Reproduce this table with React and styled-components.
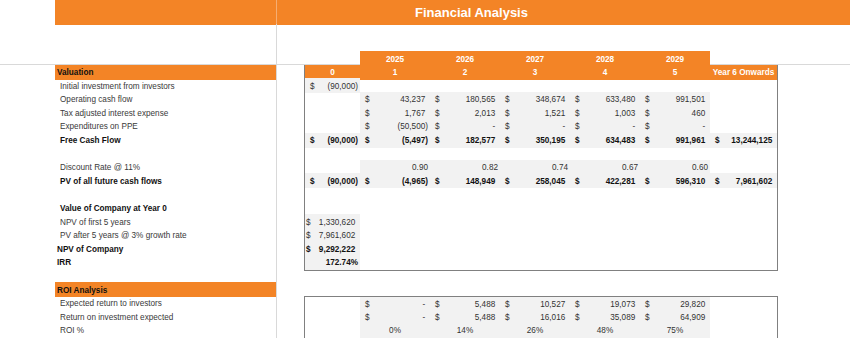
import React from "react";
import styled, { createGlobalStyle, css } from "styled-components";

const ORANGE = "#f38426";
const GRID = "#d9d9d9";
const BOX = "#808080";
const SHADE = "#f2f2f2";
const RH = "13.6px";

const GlobalStyle = createGlobalStyle`
  *, *::before, *::after { box-sizing: border-box; }
  body {
    margin: 0;
    background: #fff;
    font-family: "Liberation Sans", Arial, sans-serif;
    font-size: 8.2px;
    color: #333;
  }
`;

const Sheet = styled.div`
  width: 850px;
  height: 338px;
  overflow: hidden;
`;

const Row = styled.div`
  display: grid;
  grid-template-columns: 55px 222px 27px 56px repeat(5, 70px) 68px 1fr;
  height: ${(p) => p.$h || RH};
  line-height: ${(p) => p.$h || RH};
  ${(p) =>
    p.$rule &&
    css`
      border-bottom: 1px solid ${GRID};
    `}
`;

const TitleSide = styled.div`
  grid-column: 2;
  background: ${ORANGE};
  border-right: 1px solid #f5ad72;
`;

const TitleMain = styled.div`
  grid-column: 3 / -1;
  background: ${ORANGE};
  color: #fff;
  font-size: 13px;
  font-weight: 700;
  padding-left: 138px;
  padding-top: 1px;
`;

const Label = styled.div`
  grid-column: 2;
  border-right: 1px solid ${GRID};
  padding-left: ${(p) => (p.$indent ? 5 : 2)}px;
  padding-top: 1.5px;
  white-space: nowrap;
  font-weight: ${(p) => (p.$bold ? 700 : 400)};
  color: ${(p) => (p.$bold ? "#111" : "#3a3a3a")};
  background: ${(p) => (p.$head ? ORANGE : "transparent")};
`;

const Cell = styled.div`
  grid-column: ${(p) => p.$col + 4};
  display: flex;
  align-items: center;
  justify-content: ${(p) => p.$align || "flex-end"};
  white-space: nowrap;
  padding-top: 1.5px;
  background: ${(p) =>
    p.$fill === "orange" ? ORANGE : p.$fill === "shade" ? SHADE : "transparent"};
  color: ${(p) => (p.$fill === "orange" ? "#fff" : p.$bold ? "#111" : "#333")};
  font-weight: ${(p) => (p.$bold ? 700 : 400)};
  padding-right: ${(p) => (p.$align === "center" ? 0 : 2)}px;
  border-left: ${(p) => (p.$boxL ? `1px solid ${BOX}` : "none")};
  border-right: ${(p) => (p.$boxR ? `1px solid ${BOX}` : "none")};
  border-top: ${(p) => (p.$boxT ? `1px solid ${BOX}` : "none")};
  border-bottom: ${(p) => (p.$boxB ? `1px solid ${BOX}` : "none")};
`;

const MoneyBox = styled.div`
  display: flex;
  justify-content: space-between;
  width: 100%;
  padding-left: ${(p) => (p.$tight ? 1 : 5)}px;
`;

const Ghost = styled.span`
  visibility: hidden;
`;

const Money = ({ v, tight }) => (
  <MoneyBox $tight={tight}>
    <span>$</span>
    <span>
      {v}
      {v.startsWith("(") ? null : <Ghost>)</Ghost>}
    </span>
  </MoneyBox>
);

const COLS = [0, 1, 2, 3, 4, 5, 6];

const rows = [
  {
    label: "Valuation",
    head: true,
    bold: true,
    box: true,
    heads: ["0", "1", "2", "3", "4", "5", "Year 6 Onwards"],
  },
  {
    label: "Initial investment from investors",
    indent: true,
    box: true,
    shade: [0, 0],
    type: "money",
    vals: ["(90,000)"],
  },
  {
    label: "Operating cash flow",
    indent: true,
    box: true,
    shade: [1, 5],
    type: "money",
    vals: [null, "43,237", "180,565", "348,674", "633,480", "991,501"],
  },
  {
    label: "Tax adjusted interest expense",
    indent: true,
    box: true,
    shade: [1, 5],
    type: "money",
    vals: [null, "1,767", "2,013", "1,521", "1,003", "460"],
  },
  {
    label: "Expenditures on PPE",
    indent: true,
    box: true,
    shade: [1, 5],
    type: "money",
    vals: [null, "(50,500)", "-", "-", "-", "-"],
  },
  {
    label: "Free Cash Flow",
    indent: true,
    bold: true,
    box: true,
    shade: [0, 6],
    type: "money",
    vals: ["(90,000)", "(5,497)", "182,577", "350,195", "634,483", "991,961", "13,244,125"],
  },
  { label: "", box: true },
  {
    label: "Discount Rate @ 11%",
    indent: true,
    box: true,
    shade: [1, 5],
    type: "num",
    vals: [null, "0.90", "0.82", "0.74", "0.67", "0.60"],
  },
  {
    label: "PV of all future cash flows",
    indent: true,
    bold: true,
    box: true,
    shade: [0, 6],
    type: "money",
    vals: ["(90,000)", "(4,965)", "148,949", "258,045", "422,281", "596,310", "7,961,602"],
  },
  { label: "", box: true },
  { label: "Value of Company at Year 0", indent: true, bold: true, box: true },
  {
    label: "NPV of first 5 years",
    indent: true,
    box: true,
    shade: [0, 0],
    type: "money",
    tight: true,
    vals: ["1,330,620"],
  },
  {
    label: "PV after 5 years @ 3% growth rate",
    indent: true,
    box: true,
    shade: [0, 0],
    type: "money",
    tight: true,
    vals: ["7,961,602"],
  },
  {
    label: "NPV of Company",
    bold: true,
    box: true,
    shade: [0, 0],
    type: "money",
    tight: true,
    vals: ["9,292,222"],
  },
  {
    label: "IRR",
    bold: true,
    box: true,
    last: true,
    shade: [0, 0],
    type: "num",
    vals: ["172.74%"],
  },
  { label: "" },
  { label: "ROI Analysis", head: true, bold: true },
  {
    label: "Expected return to investors",
    indent: true,
    box: true,
    first: true,
    shade: [1, 5],
    type: "money",
    vals: [null, "-", "5,488", "10,527", "19,073", "29,820"],
  },
  {
    label: "Return on investment expected",
    indent: true,
    box: true,
    shade: [1, 5],
    type: "money",
    vals: [null, "-", "5,488", "16,016", "35,089", "64,909"],
  },
  {
    label: "ROI %",
    indent: true,
    box: true,
    shade: [1, 5],
    type: "pct",
    vals: [null, "0%", "14%", "26%", "48%", "75%"],
  },
  { label: "", box: true },
];

const renderValue = (r, v) => {
  if (r.type === "money") return <Money v={v} tight={r.tight} />;
  return v;
};

const TableRow = ({ r }) => (
  <Row>
    <Label $indent={r.indent} $bold={r.bold} $head={r.head}>
      {r.label}
    </Label>
    {COLS.map((i) => {
      const v = r.vals && r.vals[i];
      const shaded = r.shade && i >= r.shade[0] && i <= r.shade[1];
      const fill = r.heads ? "orange" : shaded ? "shade" : null;
      return (
        <Cell
          key={i}
          $col={i}
          $fill={fill}
          $bold={r.bold || r.heads}
          $align={r.heads || r.type === "pct" ? "center" : "flex-end"}
          $boxL={r.box && i === 0}
          $boxR={r.box && i === 6}
          $boxT={r.first}
          $boxB={r.last}
        >
          {r.heads ? r.heads[i] : v ? renderValue(r, v) : null}
        </Cell>
      );
    })}
  </Row>
);

const YEARS = ["2025", "2026", "2027", "2028", "2029"];

export default function App() {
  return (
    <Sheet>
      <GlobalStyle />
      <Row $h="24px">
        <TitleSide />
        <TitleMain>Financial Analysis</TitleMain>
      </Row>
      <Row $h="27px">
        <Label />
      </Row>
      <Row $rule>
        <Label />
        {YEARS.map((y, i) => (
          <Cell key={y} $col={i + 1} $fill="orange" $bold $align="center">
            {y}
          </Cell>
        ))}
      </Row>
      {rows.map((r, i) => (
        <TableRow key={i} r={r} />
      ))}
    </Sheet>
  );
}
